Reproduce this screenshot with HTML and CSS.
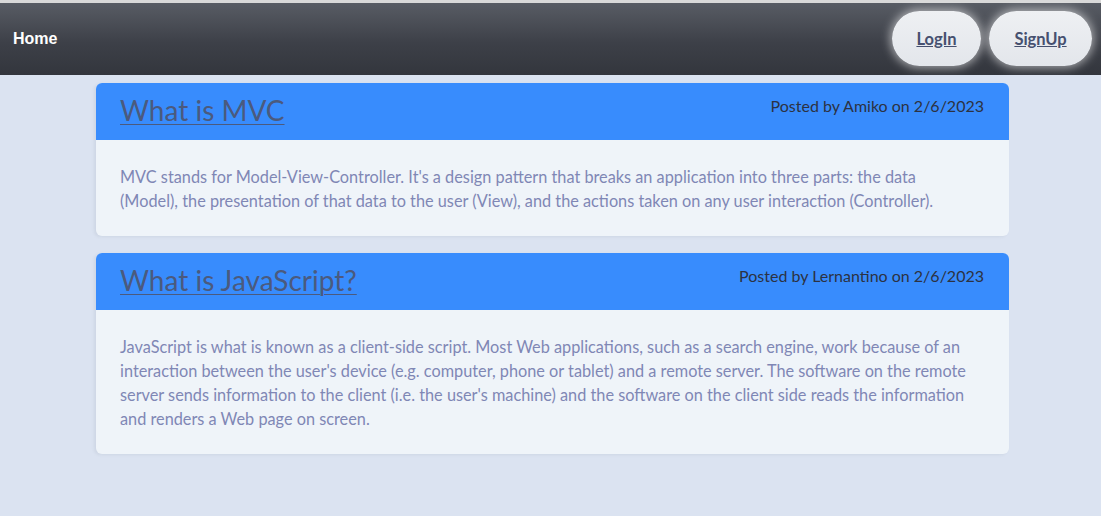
FILE: index.html
```html
<!DOCTYPE html>
<html lang="en">
<head>
<meta charset="utf-8">
<title>Tech Blog</title>
<link rel="stylesheet" href="styles.css">
</head>
<body>
<div class="topline"></div>
<nav class="navbar">
  <a class="home" href="#">Home</a>
  <div class="actions">
    <a class="btn login" href="#">LogIn</a>
    <a class="btn signup" href="#">SignUp</a>
  </div>
</nav>
<main class="posts">
  <article class="card">
    <header class="card-head">
      <a class="title" href="#">What is MVC</a>
      <span class="meta">Posted by Amiko on 2/6/2023</span>
    </header>
    <div class="card-body">
      <p>MVC stands for Model-View-Controller. It's a design pattern that breaks an application into three parts: the data (Model), the presentation of that data to the user (View), and the actions taken on any user interaction (Controller).</p>
    </div>
  </article>
  <article class="card">
    <header class="card-head">
      <a class="title" href="#">What is JavaScript?</a>
      <span class="meta">Posted by Lernantino on 2/6/2023</span>
    </header>
    <div class="card-body">
      <p>JavaScript is what is known as a client-side script. Most Web applications, such as a search engine, work because of an interaction between the user's device (e.g. computer, phone or tablet) and a remote server. The software on the remote server sends information to the client (i.e. the user's machine) and the software on the client side reads the information and renders a Web page on screen.</p>
    </div>
  </article>
</main>
</body>
</html>
```
FILE: styles.css
```css
html, body {
  margin: 0;
  padding: 0;
}
body {
  background: #dbe3f1;
  font-family: Lato, "Noto Sans", sans-serif;
  min-height: 516px;
}
.topline {
  height: 3px;
  background: #d9d9d9;
}
.navbar {
  height: 72px;
  box-sizing: border-box;
  display: flex;
  align-items: center;
  justify-content: space-between;
  padding: 0 9px 0 13px;
  background: linear-gradient(to bottom, #585c64 0%, #3d4048 55%, #33363d 100%);
}
.home {
  font-family: "Liberation Sans", Arial, sans-serif;
  font-weight: bold;
  font-size: 16px;
  color: #ffffff;
  text-decoration: none;
  margin-top: -1px;
}
.actions {
  display: flex;
  gap: 8px;
  margin-top: -1px;
}
.btn {
  display: flex;
  align-items: center;
  justify-content: center;
  height: 55px;
  box-sizing: border-box;
  border-radius: 28px;
  background: linear-gradient(to bottom, #eef0f3, #e3e6eb);
  box-shadow: 0 0 10px 2px rgba(255, 255, 255, 0.55);
  color: #46506f;
  font-weight: bold;
  font-size: 16.5px;
  text-decoration: underline;
}
.login { width: 89px; }
.signup { width: 103px; }
.posts {
  padding: 8px 92px 40px 96px;
  display: flex;
  flex-direction: column;
  gap: 17px;
}
.card {
  border-radius: 6px;
  overflow: hidden;
  background: #eff4f9;
  box-shadow: -2px 1px 3px rgba(120, 130, 150, 0.12);
}
.card-head {
  height: 57px;
  box-sizing: border-box;
  background: #388cfd;
  display: flex;
  justify-content: space-between;
  align-items: flex-start;
  padding: 8px 25px 0 24px;
}
.title {
  font-size: 28px;
  line-height: 38px;
  color: #4b5a7e;
  text-decoration: underline;
  text-decoration-thickness: 1px;
  text-underline-offset: 3px;
}
.meta {
  font-size: 16px;
  line-height: 22px;
  color: #2c3242;
  margin-top: 4px;
}
.card-body {
  padding: 25px 37px 23px 24px;
}
.card-body p {
  margin: 0;
  font-size: 16.3px;
  line-height: 24px;
  color: #7f87b5;
}
```
